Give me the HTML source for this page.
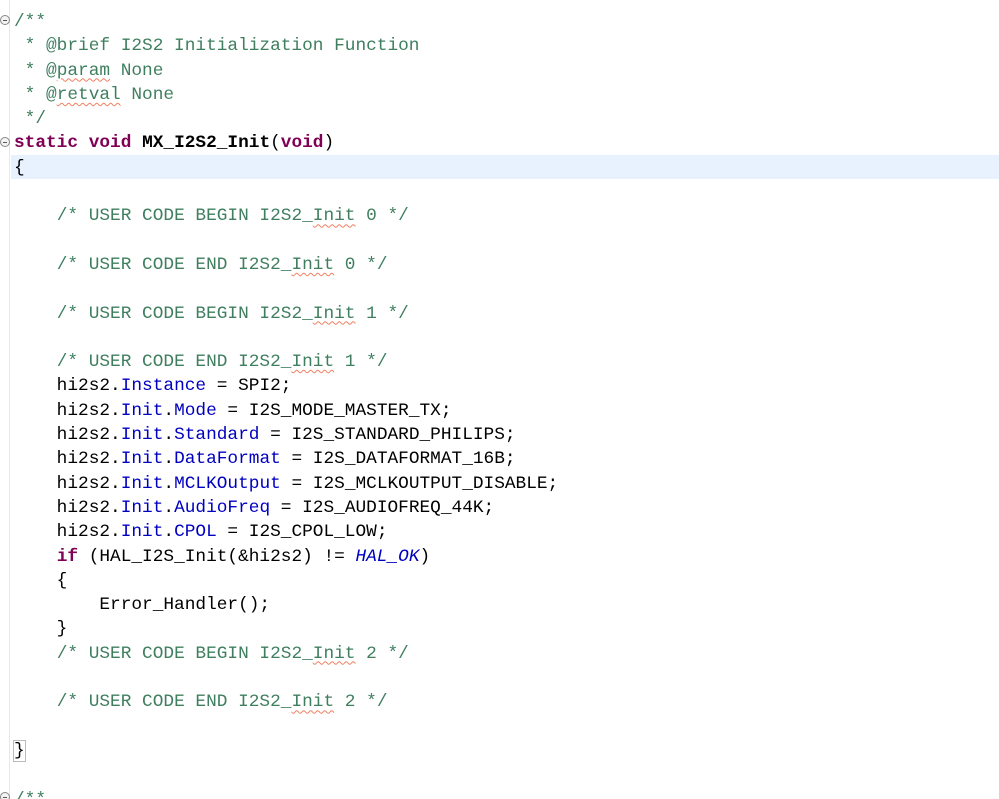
<!DOCTYPE html>
<html><head><meta charset="utf-8"><style>
html,body{margin:0;padding:0;background:#fff;width:999px;height:799px;overflow:hidden;position:relative}
.ruler{position:absolute;left:9px;top:0;width:1px;height:799px;background:#e8e8e8}
.hl{position:absolute;left:11px;top:155px;width:988px;height:24px;background:#e8f2fe}
pre{position:absolute;left:14px;top:10px;margin:0;font-family:"Liberation Mono",monospace;font-size:17.8px;line-height:24.3px;color:#000}
.c{color:#3f7f5f}.k{color:#7f0055;font-weight:bold}.f{color:#0000c0}.i{color:#0000c0;font-style:italic}
.sq{text-decoration:underline wavy #f08060;text-decoration-thickness:1px;text-underline-offset:3px}
.fold{position:absolute;left:0;width:8px;height:8px;border:1px solid #888;border-radius:50%;background:#f4f4f4}
.fold::after{content:"";position:absolute;left:2px;top:3.5px;width:4px;height:1px;background:#555}
.br{outline:1px solid #bbb}
</style></head><body>
<div class="ruler"></div>
<div class="hl"></div>
<div class="fold" style="top:15px"></div>
<div class="fold" style="top:137px"></div>
<div class="fold" style="top:792px"></div>
<pre><span class="c">/**
 * @brief I2S2 Initialization Function
 * @<span class="sq">param</span> None
 * @<span class="sq">retval</span> None
 */</span>
<span class="k">static</span> <span class="k">void</span> <b>MX_I2S2_Init</b>(<span class="k">void</span>)
{

    <span class="c">/* USER CODE BEGIN I2S2_<span class="sq">Init</span> 0 */</span>

    <span class="c">/* USER CODE END I2S2_<span class="sq">Init</span> 0 */</span>

    <span class="c">/* USER CODE BEGIN I2S2_<span class="sq">Init</span> 1 */</span>

    <span class="c">/* USER CODE END I2S2_<span class="sq">Init</span> 1 */</span>
    hi2s2.<span class="f">Instance</span> = SPI2;
    hi2s2.<span class="f">Init</span>.<span class="f">Mode</span> = I2S_MODE_MASTER_TX;
    hi2s2.<span class="f">Init</span>.<span class="f">Standard</span> = I2S_STANDARD_PHILIPS;
    hi2s2.<span class="f">Init</span>.<span class="f">DataFormat</span> = I2S_DATAFORMAT_16B;
    hi2s2.<span class="f">Init</span>.<span class="f">MCLKOutput</span> = I2S_MCLKOUTPUT_DISABLE;
    hi2s2.<span class="f">Init</span>.<span class="f">AudioFreq</span> = I2S_AUDIOFREQ_44K;
    hi2s2.<span class="f">Init</span>.<span class="f">CPOL</span> = I2S_CPOL_LOW;
    <span class="k">if</span> (HAL_I2S_Init(&amp;hi2s2) != <span class="i">HAL_OK</span>)
    {
        Error_Handler();
    }
    <span class="c">/* USER CODE BEGIN I2S2_<span class="sq">Init</span> 2 */</span>

    <span class="c">/* USER CODE END I2S2_<span class="sq">Init</span> 2 */</span>

<span class="br">}</span>

<span class="c">/**</span></pre>
</body></html>
